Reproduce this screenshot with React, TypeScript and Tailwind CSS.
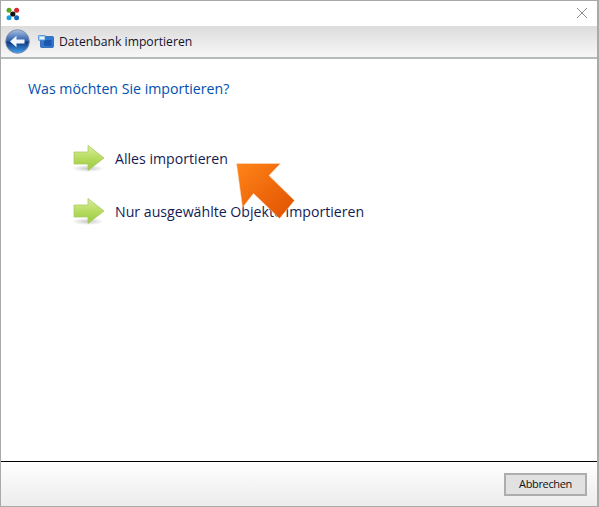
import React from "react";

const font = { fontFamily: '"Open Sans", "Noto Sans", sans-serif' };

function AppLogo() {
  return (
    <svg width="14" height="14" viewBox="0 0 14 14">
      <circle cx="3" cy="3.2" r="2.5" fill="#5aa820" />
      <circle cx="10.6" cy="3.2" r="2.5" fill="#d8262c" />
      <circle cx="3" cy="10.8" r="2.5" fill="#19a3dc" />
      <circle cx="10.6" cy="10.8" r="2.5" fill="#1565b8" />
      <circle cx="6.8" cy="7" r="2.6" fill="#111" />
    </svg>
  );
}

function BackButton() {
  return (
    <svg width="25" height="25" viewBox="0 0 25 25">
      <defs>
        <linearGradient id="bk" x1="0" y1="0" x2="0" y2="1">
          <stop offset="0" stopColor="#a9c0e2" />
          <stop offset="0.46" stopColor="#2f62b0" />
          <stop offset="0.54" stopColor="#103a86" />
          <stop offset="1" stopColor="#45a4ee" />
        </linearGradient>
      </defs>
      <circle cx="12.5" cy="12.5" r="11.8" fill="url(#bk)" stroke="#7d8ba3" strokeWidth="0.9" />
      <path d="M5 12.5 L11.5 6.8 V10.4 H19.5 V14.6 H11.5 V18.2 Z" fill="#f2f5fa" />
    </svg>
  );
}

function WizardIcon() {
  return (
    <svg width="16" height="13" viewBox="0 0 16 13">
      <rect x="2.5" y="1.5" width="13" height="11" rx="1" fill="#2f78d2" stroke="#1c55a8" strokeWidth="0.7" />
      <rect x="6" y="5" width="7.5" height="5.8" fill="#1a57ad" />
      <rect x="0.4" y="0.4" width="7" height="5" rx="0.8" fill="#a5d3f2" stroke="#2a6fc9" strokeWidth="0.7" />
      <path d="M2 3 H6" stroke="#fff" strokeWidth="1.5" />
    </svg>
  );
}

function GreenArrow({ id }: { id: string }) {
  return (
    <svg width="32" height="27" viewBox="0 0 32 27">
      <defs>
        <linearGradient id={id} x1="0" y1="0" x2="0" y2="1">
          <stop offset="0" stopColor="#d9ee9c" />
          <stop offset="0.55" stopColor="#b4da5c" />
          <stop offset="1" stopColor="#9cc844" />
        </linearGradient>
        <radialGradient id={id + "s"}>
          <stop offset="0" stopColor="#000" stopOpacity="0.22" />
          <stop offset="1" stopColor="#000" stopOpacity="0" />
        </radialGradient>
      </defs>
      <ellipse cx="15" cy="23.5" rx="16" ry="3.5" fill={`url(#${id}s)`} />
      <path
        d="M1 7 H15 V0.5 L31 13 L15 25.5 V19 H1 Z"
        fill={`url(#${id})`}
        stroke="#a8cc62"
        strokeWidth="0.8"
      />
    </svg>
  );
}

function OrangeArrow() {
  return (
    <svg width="60" height="58" viewBox="0 0 60 58">
      <defs>
        <linearGradient id="oa" x1="0" y1="0" x2="1" y2="1">
          <stop offset="0" stopColor="#ff8418" />
          <stop offset="1" stopColor="#e05000" />
        </linearGradient>
      </defs>
      <path
        d="M0.5 0.5 L44.5 0.5 L33 12.5 L58.5 37.5 L43.5 55.5 L17.5 30.5 L6.5 44.5 Z"
        fill="url(#oa)"
        stroke="#ffe3cc"
        strokeWidth="0.5"
      />
    </svg>
  );
}

function Option({ id, label }: { id: string; label: string }) {
  return (
    <div className="flex items-center h-[27px] gap-[10px]">
      <GreenArrow id={id} />
      <span className="text-[14.15px] text-[#151c55] whitespace-nowrap">{label}</span>
    </div>
  );
}

export default function App() {
  return (
    <div
      className="relative w-[599px] h-[507px] flex flex-col bg-white border-l border-r-2 border-y border-[#a9a9a9] overflow-hidden"
      style={font}
    >
      {/* Title bar */}
      <div className="h-[25px] shrink-0 flex items-center justify-between pl-[5px] pr-[9px]">
        <AppLogo />
        <svg width="12" height="12" viewBox="0 0 12 12" className="mb-[1px]">
          <path d="M1 1 L11 11 M11 1 L1 11" stroke="#8f8f8f" strokeWidth="1" />
        </svg>
      </div>

      {/* Header */}
      <div className="h-[33px] shrink-0 flex items-center pl-[4px] bg-gradient-to-b from-[#dcdcdc] to-[#f7f7f7] border-b-2 border-[#b4bcb8]">
        <BackButton />
        <div className="ml-[8px] flex items-center gap-[5px]">
          <WizardIcon />
          <span className="text-[12.2px] text-[#14142e] relative top-[1px]">Datenbank importieren</span>
        </div>
      </div>

      {/* Content */}
      <div className="flex-1 flex flex-col">
        <h1 className="mt-[20px] ml-[27px] text-[14.15px] leading-[20px] font-normal text-[#0050b0]">
          Was möchten Sie importieren?
        </h1>
        <div className="mt-[46px] ml-[72px] flex flex-col gap-[26px]">
          <Option id="g1" label="Alles importieren" />
          <Option id="g2" label="Nur ausgewählte Objekte importieren" />
        </div>
      </div>

      {/* Footer */}
      <div className="h-[45px] shrink-0 flex items-center justify-end pr-[10px] pt-[1px] border-t border-black bg-gradient-to-b from-[#ffffff] to-[#ececec]">
        <button className="w-[83px] h-[23px] bg-[#e1e1e1] border-2 border-[#adadad] text-[11px] tracking-[-0.35px] text-[#111]">
          Abbrechen
        </button>
      </div>

      {/* Annotation arrow */}
      <div className="absolute left-[235px] top-[162px]">
        <OrangeArrow />
      </div>
    </div>
  );
}
